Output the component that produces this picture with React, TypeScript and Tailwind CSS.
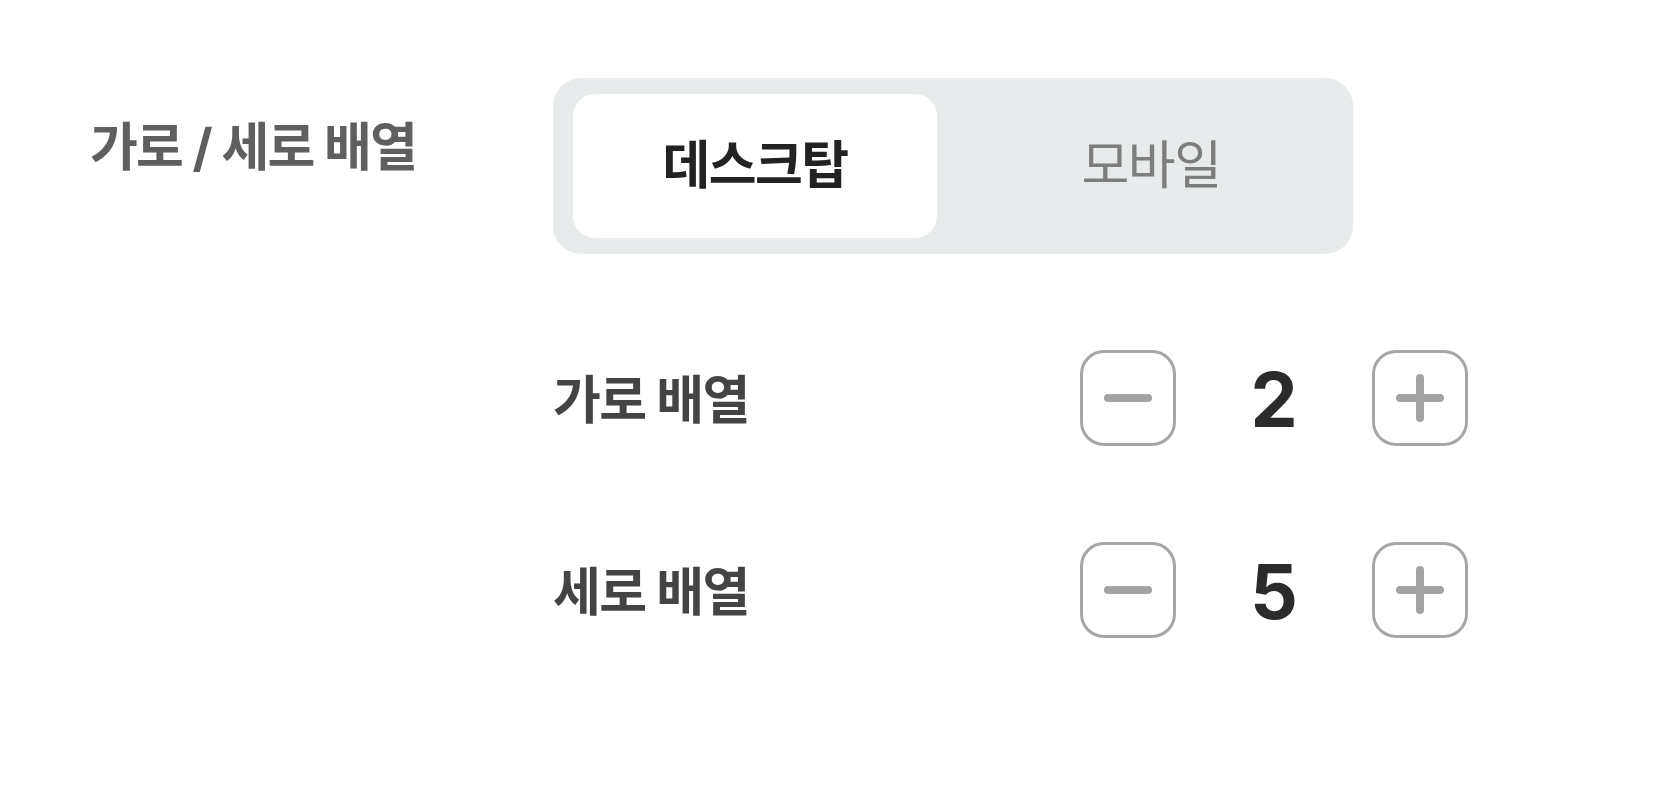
import { useState } from "react";

const font = "font-['Inter','Noto_Sans_CJK_KR',sans-serif]";

function StepButton({ kind, onClick }: { kind: "minus" | "plus"; onClick: () => void }) {
  return (
    <button
      onClick={onClick}
      className="w-[96px] h-[96px] rounded-[24px] border-[3px] border-[#a6a6a6] bg-white flex items-center justify-center"
    >
      <svg width="52" height="52" viewBox="0 0 52 52" fill="none">
        <line x1="6" y1="26" x2="46" y2="26" stroke="#a3a3a3" strokeWidth="8" strokeLinecap="round" />
        {kind === "plus" && (
          <line x1="26" y1="6" x2="26" y2="46" stroke="#a3a3a3" strokeWidth="8" strokeLinecap="round" />
        )}
      </svg>
    </button>
  );
}

function Stepper({ label, value, onChange }: { label: string; value: number; onChange: (v: number) => void }) {
  return (
    <div className="flex items-center justify-between w-[915px]">
      <span className="pt-[6px] text-[52px] font-bold text-[#444444] tracking-[-0.03em] leading-none">{label}</span>
      <div className="flex items-center">
        <StepButton kind="minus" onClick={() => onChange(Math.max(1, value - 1))} />
        <span className="w-[196px] pt-[3px] text-center text-[75px] font-bold text-[#2b2b2b] leading-none">{value}</span>
        <StepButton kind="plus" onClick={() => onChange(value + 1)} />
      </div>
    </div>
  );
}

export default function App() {
  const [mode, setMode] = useState<"desktop" | "mobile">("desktop");
  const [cols, setCols] = useState(2);
  const [rows, setRows] = useState(5);

  return (
    <div className={`min-h-screen bg-white flex pl-[90px] pt-[78px] ${font}`}>
      <div className="w-[463px] pt-[44px]">
        <h2 className="text-[52px] font-bold text-[#5f5f5f] tracking-[-0.035em] leading-none">가로 / 세로 배열</h2>
      </div>

      <div className="flex flex-col gap-[96px]">
        <div className="w-[800px] h-[176px] rounded-[28px] bg-[#e8ebec] px-5 py-4 grid grid-cols-2 gap-8">
          <button
            onClick={() => setMode("desktop")}
            className={`rounded-[22px] text-[52px] tracking-[-0.03em] ${
              mode === "desktop" ? "bg-white font-bold text-[#222222]" : "text-[#7d7d7d]"
            }`}
          >
            데스크탑
          </button>
          <button
            onClick={() => setMode("mobile")}
            className={`rounded-[22px] text-[52px] tracking-[-0.03em] ${
              mode === "mobile" ? "bg-white font-bold text-[#222222]" : "text-[#7d7d7d]"
            }`}
          >
            모바일
          </button>
        </div>

        <Stepper label="가로 배열" value={cols} onChange={setCols} />
        <Stepper label="세로 배열" value={rows} onChange={setRows} />
      </div>
    </div>
  );
}
